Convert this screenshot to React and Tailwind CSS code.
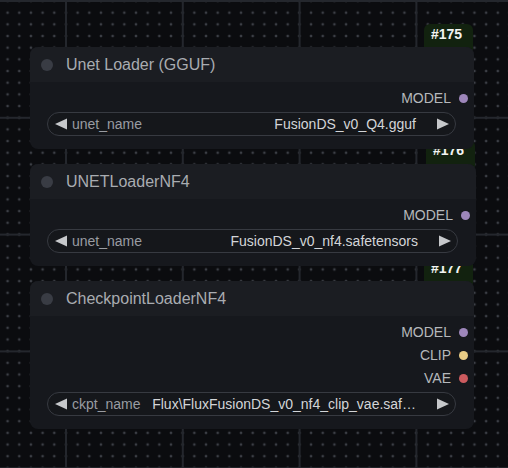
const nodes = [
  {
    id: '#175',
    badge: 'left-[424px] top-[24px]',
    box: 'left-[30px] top-[47px] w-[444px]',
    title: 'Unet Loader (GGUF)',
    outputs: [{ name: 'MODEL', dot: 'bg-[#9d86ba]' }],
    label: 'unet_name',
    value: 'FusionDS_v0_Q4.gguf',
  },
  {
    id: '#176',
    badge: 'left-[426px] top-[140px]',
    box: 'left-[30px] top-[164px] w-[446px]',
    title: 'UNETLoaderNF4',
    outputs: [{ name: 'MODEL', dot: 'bg-[#9d86ba]' }],
    label: 'unet_name',
    value: 'FusionDS_v0_nf4.safetensors',
  },
  {
    id: '#177',
    badge: 'left-[424px] top-[258px]',
    box: 'left-[30px] top-[281px] w-[444px]',
    title: 'CheckpointLoaderNF4',
    outputs: [
      { name: 'MODEL', dot: 'bg-[#9d86ba]' },
      { name: 'CLIP', dot: 'bg-[#e8cc86]' },
      { name: 'VAE', dot: 'bg-[#cc5b5f]' },
    ],
    label: 'ckpt_name',
    value: 'Flux\\FluxFusionDS_v0_nf4_clip_vae.saf…',
  },
];

function Arrow({ dir }) {
  return (
    <svg width="12" height="12" viewBox="0 0 12 12" className="shrink-0">
      <polygon points={dir === 'left' ? '12,0.5 12,11.5 0,6' : '0,0.5 0,11.5 12,6'} fill="#c6c8cb" />
    </svg>
  );
}

function Node({ node }) {
  return (
    <div className={`absolute z-10 rounded-lg bg-[#16181d] ${node.box}`}>
      {/* header */}
      <div className="h-[35px] flex items-center rounded-t-lg bg-[#1b1d22]">
        <span className="ml-[11px] w-[12px] h-[12px] rounded-full bg-[#393c44]"></span>
        <span className="ml-[13px] text-[16px] text-[#a9acb1]">{node.title}</span>
      </div>

      {/* outputs */}
      <div className="pt-[5px]">
        {node.outputs.map((o) => (
          <div key={o.name} className="h-[23px] flex items-center justify-end pr-[6px]">
            <span className="text-[14px] text-[#b5b8bc]">{o.name}</span>
            <span className={`ml-[8px] w-[9px] h-[9px] rounded-full ${o.dot}`}></span>
          </div>
        ))}
      </div>

      {/* combo widget */}
      <div className="mt-[2px] mb-[13px] ml-[17px] mr-[18px] h-[24px] flex items-center rounded-full border border-[#373a41] bg-[#15171b] pl-[7px] pr-[6px]">
        <Arrow dir="left" />
        <span className="ml-[5px] text-[14px] text-[#999ca2] whitespace-nowrap">{node.label}</span>
        <span className="ml-auto mr-[21px] text-[14px] text-[#d3d5d8] whitespace-nowrap">{node.value}</span>
        <Arrow dir="right" />
      </div>
    </div>
  );
}

export default function App() {
  return (
    <div className="relative w-[508px] h-[468px] overflow-hidden bg-[#0b0c0f] bg-[linear-gradient(to_right,#24272d_2px,transparent_2px),linear-gradient(to_bottom,#24272d_2px,transparent_2px),radial-gradient(circle,#3c3f46_1px,transparent_1.7px)] bg-[size:116.8px_116.8px,116.8px_116.8px,11.68px_11.68px] bg-[position:65px_0px,0px_0px,1.76px_6.84px] font-['Liberation_Sans',Arial,sans-serif]">
      {nodes.map((n) => (
        <div
          key={n.id + 'b'}
          className={`absolute w-[49px] h-[34px] rounded-[6px] bg-[#12220f] pl-[7px] text-[14px] leading-[20px] font-bold text-[#f2f3f2] ${n.badge}`}
        >
          {n.id}
        </div>
      ))}
      {nodes.map((n) => (
        <Node key={n.id} node={n} />
      ))}
    </div>
  );
}
